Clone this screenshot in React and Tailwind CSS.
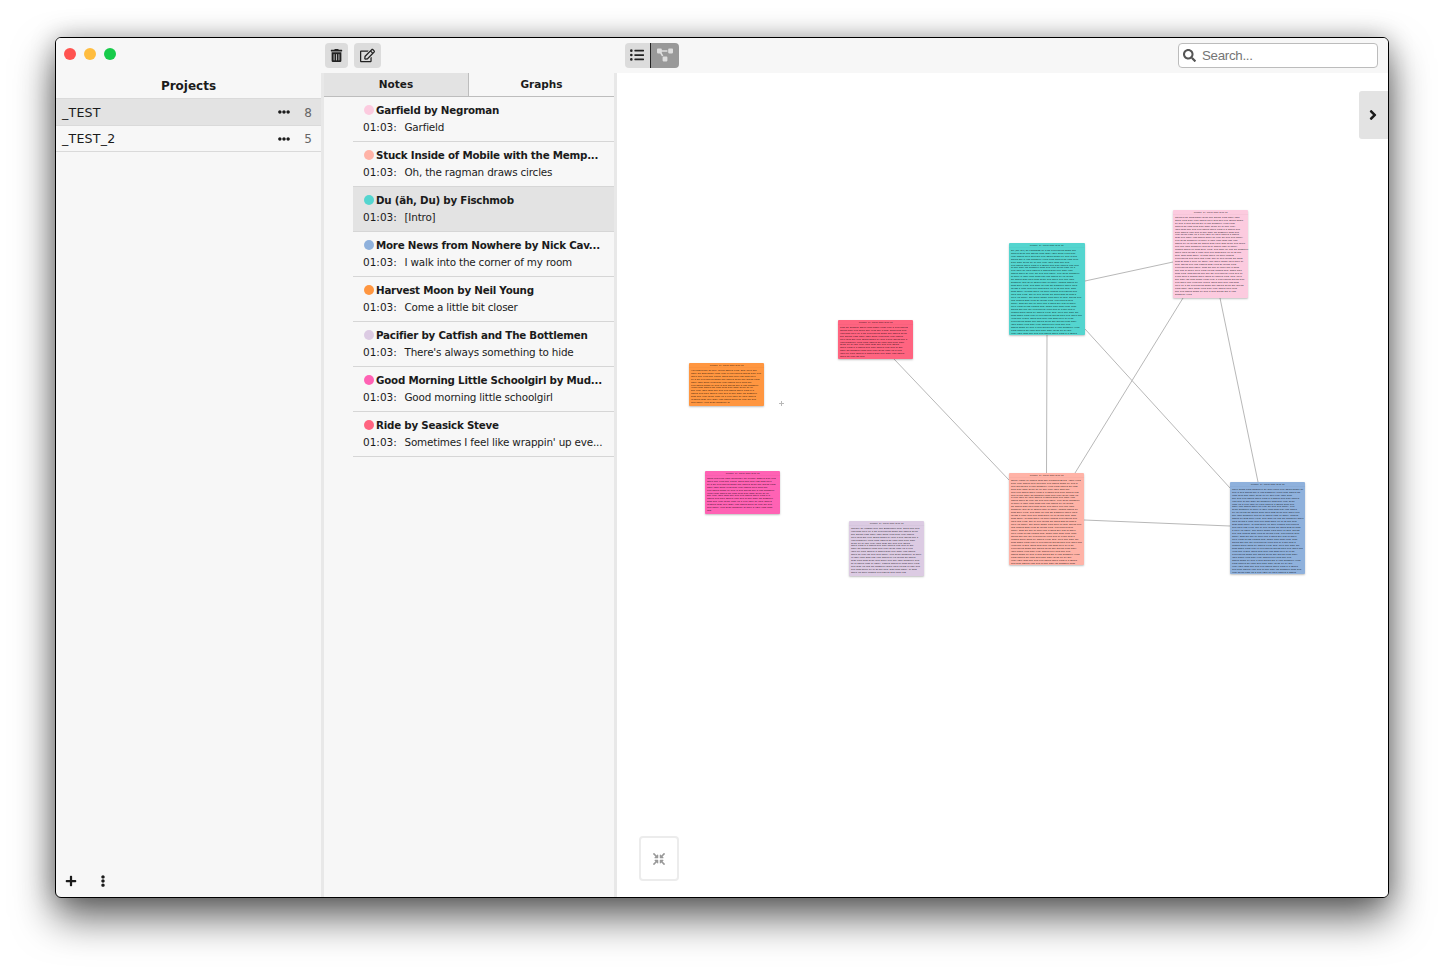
import React from "react";
import {
  FaTrashAlt,
  FaRegEdit,
  FaListUl,
  FaProjectDiagram,
  FaSearch,
  FaEllipsisH,
  FaEllipsisV,
  FaPlus,
  FaCompressArrowsAlt,
  FaAngleRight,
} from "react-icons/fa";

const projects = [
  { name: "_TEST", count: 8, active: true },
  { name: "_TEST_2", count: 5, active: false },
];

const notes = [
  { title: "Garfield by Negroman", text: "Garfield", dot: "bg-[#fccbdf]" },
  { title: "Stuck Inside of Mobile with the Memp...", text: "Oh, the ragman draws circles", dot: "bg-[#ffb3a7]" },
  { title: "Du (äh, Du) by Fischmob", text: "[Intro]", dot: "bg-[#54d5cf]", active: true },
  { title: "More News from Nowhere by Nick Cav...", text: "I walk into the corner of my room", dot: "bg-[#8fb1dc]" },
  { title: "Harvest Moon by Neil Young", text: "Come a little bit closer", dot: "bg-[#ff9640]" },
  { title: "Pacifier by Catfish and The Bottlemen", text: "There's always something to hide", dot: "bg-[#dccbe3]" },
  { title: "Good Morning Little Schoolgirl by Mud...", text: "Good morning little schoolgirl", dot: "bg-[#ff62b4]" },
  { title: "Ride by Seasick Steve", text: "Sometimes I feel like wrappin' up eve...", dot: "bg-[#ff6480]" },
];

// Canvas coordinates, relative to the top left corner of the graph pane.
// `last` is the length of the card's final line in characters.
const cards = [
  { title: "Harvest Moon by Neil Young", lines: 12, last: 31, box: "left-[72px] top-[290.4px] h-[42.5px] bg-[#ff9640]" },
  { title: "Ride by Seasick Steve", lines: 11, last: 20, box: "left-[220.5px] top-[246.5px] h-[39.7px] bg-[#ff6480]" },
  { title: "Good Morning Little Schoolgirl by Muddy Waters", lines: 12, last: 5, box: "left-[87.5px] top-[398.4px] h-[42.5px] bg-[#ff62b4]" },
  { title: "Pacifier by Catfish and The Bottlemen", lines: 16, last: 42, box: "left-[231.6px] top-[448.3px] h-[55px] bg-[#dccbe3]" },
  { title: "Du (äh, Du) by Fischmob", lines: 29, last: 56, box: "left-[392.3px] top-[169.8px] h-[92px] bg-[#54d5cf]" },
  { title: "Garfield by Negroman", lines: 27, last: 16, box: "left-[556.2px] top-[137.4px] h-[87.4px] bg-[#fccbdf]" },
  { title: "Stuck Inside of Mobile with the Memphis Blues Again", lines: 29, last: 56, box: "left-[391.8px] top-[400px] h-[92px] bg-[#ffb3a7]" },
  { title: "More News from Nowhere by Nick Cave", lines: 29, last: 56, box: "left-[613.2px] top-[408.6px] h-[92px] bg-[#8fb1dc]" },
];

const edges = [
  [277, 286, 392, 407],
  [468, 208, 556, 189],
  [566, 225, 458, 400],
  [603, 225, 641, 409],
  [430, 262, 429.5, 400],
  [468, 256, 613, 415],
  [467, 447, 613, 453],
];

const words =
  "the note goes on here with some more words and lines of text that fill up the card from one side to the other, and then a few others follow after that until the end of it comes into view. So we write a little more about this, about that and everything between".split(" ");

function wrapLines(title, count, last, seed) {
  const out = [];
  let line = title;
  let k = seed * 7;
  while (out.length < count) {
    const limit = out.length === count - 1 ? last : 57;
    const word = words[(k * 11 + ((k * k) % 5)) % words.length];
    if (line.length + word.length + 1 > limit) {
      out.push(line);
      line = word;
    } else {
      line += " " + word;
    }
    k += 1;
  }
  return out;
}

function Card({ title, lines, last, box, index }) {
  return (
    <div className={"absolute w-[75.3px] rounded-[1px] shadow-[0_1px_2px_rgba(0,0,0,0.25)] " + box}>
      <div className="w-[301px] origin-top-left scale-25 text-[9.6px] text-black/85">
        <div className="h-[17px] border-b border-black/10 text-center text-[8px] leading-[16px]">Created: 27. March 2021 at 01:03</div>
        <div className="px-[8px] pt-[4px] leading-[11.9px] whitespace-nowrap">
          {wrapLines(title, lines, last, index + 1).map((l, i) => (
            <div key={i}>{l}</div>
          ))}
        </div>
      </div>
    </div>
  );
}

function Toolbar() {
  return (
    <div className="flex h-[35px] shrink-0 bg-[#f7f7f7]">
      <div className="flex w-[269px] items-start gap-2 pl-2 pt-[10.4px]">
        <span className="size-3 rounded-full bg-[#ff5350]" />
        <span className="size-3 rounded-full bg-[#ffbd3f]" />
        <span className="size-3 rounded-full bg-[#17cb4a]" />
      </div>
      <div className="flex w-[300px] items-center gap-1.5 text-[#222]">
        <button className="flex h-[25px] w-[23px] items-center justify-center rounded bg-[#dcdcdc]"><FaTrashAlt size={13} /></button>
        <button className="flex h-[25px] w-[27px] items-center justify-center rounded bg-[#dcdcdc]"><FaRegEdit size={15} /></button>
      </div>
      <div className="flex items-center">
        <button className="flex h-[25px] w-[26px] items-center justify-center rounded-l border-r border-[#222] bg-[#dcdcdc] pr-px pb-px text-[#222]"><FaListUl size={14} /></button>
        <button className="flex h-[25px] w-[28px] items-center justify-center rounded-r bg-[#999] pb-px text-[#dedede]"><FaProjectDiagram size={16} /></button>
      </div>
      <div className="ml-auto mr-[10px] flex items-center">
        <div className="flex h-[25px] w-[200px] items-center rounded border border-[#bcbcbc] bg-white pl-1">
          <FaSearch size={13} className="text-[#555]" />
          <span className="pl-1.5 font-['Liberation_Sans',sans-serif] text-[13.33px] tracking-[-0.3px] text-[#757575]">Search...</span>
        </div>
      </div>
    </div>
  );
}

function ProjectPane() {
  return (
    <div className="flex w-[265px] shrink-0 flex-col">
      <div className="h-[26px] border-b border-[#dadada] text-center text-[12px] font-bold leading-[27px]">Projects</div>
      {projects.map((p) => (
        <div key={p.name} className={"flex h-[26.5px] items-center border-b border-[#dadada] pl-1.5 pt-px pr-[9px] text-[12px] " + (p.active ? "bg-[#e3e3e3]" : "")}>
          <span className="flex-1 pt-0.5 text-[12.6px] tracking-[0.2px]">{p.name}</span>
          <FaEllipsisH size={12} />
          <span className="w-[22px] pt-px text-right text-[#666]">{p.count}</span>
        </div>
      ))}
      <div className="mt-auto flex h-[33px] items-center gap-5 pl-[9px]">
        <FaPlus size={12} />
        <FaEllipsisV size={12} />
      </div>
    </div>
  );
}

function NotePane() {
  return (
    <div className="w-[290px] shrink-0">
      <div className="flex h-6 border-b border-[#bdbdbd] text-center text-[10.5px] font-bold leading-[23px]">
        <div className="w-[145px] border-r border-[#bdbdbd] bg-[#e3e3e3]">Notes</div>
        <div className="flex-1">Graphs</div>
      </div>
      <div className="pl-[29px]">
        {notes.map((n) => (
          <div key={n.title} className={"h-[45px] border-b border-[#d6d6d6] pl-[10px] pt-[5px] whitespace-nowrap " + (n.active ? "bg-[#e3e3e3]" : "")}>
            <div className="flex h-[17px] items-center gap-[2px] text-[10.3px] font-bold tracking-[-0.23px]">
              <span className={"mb-px ml-px size-[10px] shrink-0 rounded-full " + n.dot} />
              <span>{n.title}</span>
            </div>
            <div className="flex h-[17px] items-center text-[10.5px]">
              <span className="w-[41.5px] shrink-0">01:03:</span>
              <span className="text-[10.4px] tracking-[-0.18px]">{n.text}</span>
            </div>
          </div>
        ))}
      </div>
    </div>
  );
}

function GraphPane() {
  return (
    <div className="relative flex-1 overflow-hidden bg-white">
      <svg className="absolute left-0 top-0" width="771" height="824">
        {edges.map(([x1, y1, x2, y2]) => (
          <line key={x1 + "-" + x2 + "-" + y2} x1={x1} y1={y1} x2={x2} y2={y2} stroke="#b8b8b8" strokeWidth="1" />
        ))}
        <path d="M162 330.5h5M164.5 328v5" stroke="#b8b8b8" strokeWidth="1" />
      </svg>
      {cards.map((c, i) => (
        <Card key={c.title} {...c} index={i} />
      ))}
      <button className="absolute right-0 top-[18px] flex h-12 w-[29px] items-center justify-center rounded-l-[3px] bg-[#e3e3e3] pr-px">
        <FaAngleRight size={16} />
      </button>
      <button className="absolute bottom-4 left-[22px] flex h-[45px] w-10 items-center justify-center rounded border-2 border-[#ececec] text-[#999]">
        <FaCompressArrowsAlt size={12} />
      </button>
    </div>
  );
}

export default function App() {
  return (
    <div className="h-[971px] w-[1444px] overflow-hidden bg-white pl-[55px] pt-[37px] font-['DejaVu_Sans',sans-serif] text-[#1b1b1b]">
      <div className="flex h-[861px] w-[1334px] flex-col overflow-hidden rounded-[6px] border border-black bg-[#f7f7f7] shadow-[0_20px_40px_rgba(0,0,0,0.6),0_0_24px_rgba(0,0,0,0.25)]">
        <Toolbar />
        <div className="flex min-h-0 flex-1">
          <ProjectPane />
          <div className="w-[3px] shrink-0 bg-[#e8e8e8]" />
          <NotePane />
          <div className="w-[3px] shrink-0 bg-[#e8e8e8]" />
          <GraphPane />
        </div>
      </div>
    </div>
  );
}
